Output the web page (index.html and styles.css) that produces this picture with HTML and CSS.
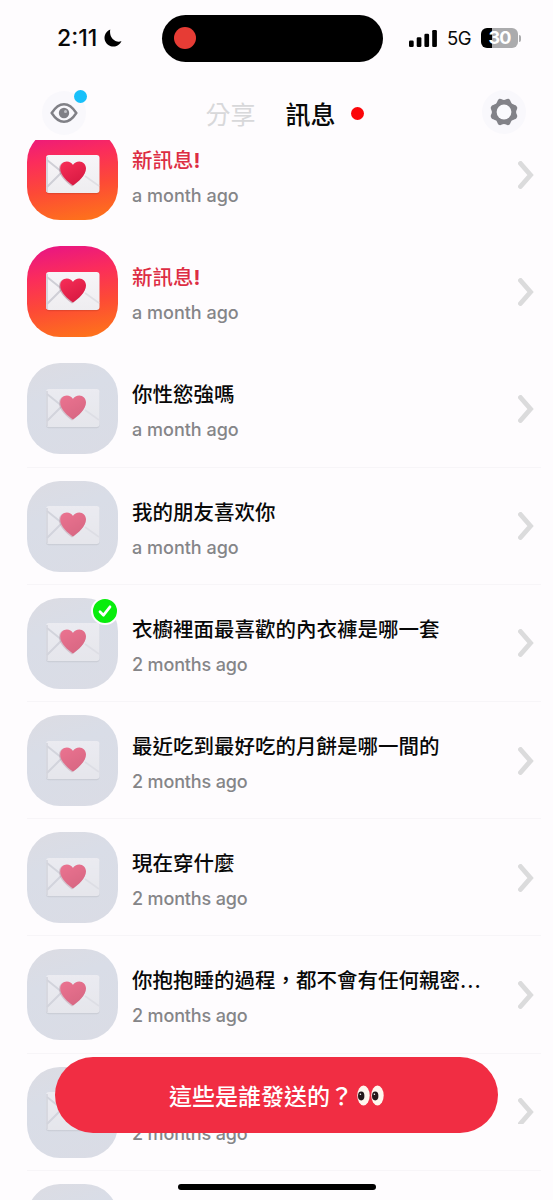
FILE: index.html
```
<!DOCTYPE html>
<html lang="zh-Hant">
<head>
<meta charset="utf-8">
<title>訊息</title>
<link rel="stylesheet" href="styles.css">
</head>
<body>
<svg class="defs" width="0" height="0" aria-hidden="true">
  <defs>
    <linearGradient id="paper" x1="0" y1="0" x2="0" y2="1"><stop offset="0" stop-color="#f7f5f8"/><stop offset="1" stop-color="#eeedf0"/></linearGradient>
    <linearGradient id="heart" x1="0" y1="0" x2="0.6" y2="1"><stop offset="0" stop-color="#f82e58"/><stop offset="1" stop-color="#d81a42"/></linearGradient>
    <symbol id="letter" viewBox="0 0 60 44">
      <rect x="3" y="3.200" width="53.500" height="38" rx="3" fill="#000" opacity=".1"/>
      <rect x="3" y="2" width="53.500" height="38" rx="3" fill="url(#paper)"/>
      <path d="M4 7 19 19 4 34" fill="none" stroke="#cfcfd6" stroke-width="2"/>
      <path d="M56 33 42 23" fill="none" stroke="#e0dfe4" stroke-width="1.600"/>
      <path d="M4 4v35" stroke="#d0d0d7" stroke-width="1.600"/>
      <path d="M29 33.500C24 29.800 16 23.300 16 16.100C16 11.800 19 9.100 22.700 9.100C25.500 9.100 27.800 10.500 29.200 12.500C30.700 10.500 32.800 9.100 35.700 9.100C39.500 9.100 42.300 11.800 42.300 15.900C42.300 23 34 29.800 29 33.500Z" fill="#8d4058" opacity=".35"/>
      <path d="M30 32.500C25 29 17.200 22.500 17.200 15.500C17.200 11.400 20.200 8.500 23.800 8.500C26.500 8.500 28.700 9.800 30 12C31.400 9.800 33.700 8.500 36.300 8.500C40 8.500 43 11.400 43 15.500C43 22.500 35 29 30 32.500Z" fill="url(#heart)"/>
    </symbol>
    <symbol id="chevron" viewBox="0 0 16 28"><path d="M2.500 2.500 12.500 14 2.500 25.500" fill="none" stroke="#dbdbdc" stroke-width="4.900" stroke-linecap="round" stroke-linejoin="miter"/></symbol>
  </defs>
</svg>

<header class="status">
  <div class="clock"><span class="time">2:11</span><svg class="moon" viewBox="0 0 18 18"><path d="M6.300.500A8.800 8.800 0 1 0 17.500 12C12 14.600 4.500 8.800 6.300.500Z"/></svg></div>
  <div class="island"><span class="recording"></span></div>
  <div class="signals">
    <svg class="bars" viewBox="0 0 28 17"><rect y="10.500" width="4.700" height="6.500" rx="1.300"/><rect x="7.700" y="7.300" width="4.700" height="9.700" rx="1.300"/><rect x="15.400" y="3.700" width="4.700" height="13.300" rx="1.300"/><rect x="23.200" width="4.700" height="17" rx="1.300"/></svg>
    <span class="network">5G</span>
    <div class="battery">30</div><span class="battery-tip"></span>
  </div>
</header>

<nav class="nav">
  <div class="round eye"><svg viewBox="0 0 28 22"><path d="M1.700 11C5.500 5 9.500 2.200 14 2.200S22.500 5 26.300 11C22.500 17 18.500 19.800 14 19.800S5.500 17 1.700 11Z" fill="none" stroke="#808086" stroke-width="2.400"/><circle cx="14" cy="11" r="5.200" fill="#808086"/><circle cx="15.500" cy="9.600" r="1.500" fill="#c2c2c7"/></svg><span class="blue-dot"></span></div>
  <div class="tabs"><span class="tab">分享</span><span class="tab active">訊息</span><span class="red-dot"></span></div>
  <div class="round gear"><svg viewBox="0 0 28 28"><path d="M14 1.900C16 1.900 17 .3 18.900 .9C20.600 1.600 20.400 3.800 21.800 5.400C23.600 6.800 26.400 6.600 27.100 9.100C27.700 11 26.100 12 26.100 14S27.700 17 27.100 18.900C26.400 21.400 23.600 21.200 21.800 22.600C20.400 24.200 20.600 26.400 18.900 27.100C17 27.700 16 26.100 14 26.100S11 27.700 9.100 27.100C7.400 26.400 7.600 24.200 6.200 22.600C4.400 21.200 1.600 21.400 .9 18.900C.3 17 1.900 16 1.900 14S.3 11 .9 9.100C1.600 6.600 4.400 6.800 6.200 5.400C7.600 3.800 7.400 1.600 9.100 .9C11 .3 12 1.900 14 1.900Z" fill="#828288"/><circle cx="14" cy="14" r="7.400" fill="#fafafd"/></svg></div>
</nav>

<main class="list">
  <article class="row unread"><div class="avatar"><svg><use href="#letter"/></svg></div><div class="text"><h2>新訊息<b>!</b></h2><p class="m">a month ago</p></div><svg class="go"><use href="#chevron"/></svg></article>
  <article class="row unread"><div class="avatar"><svg><use href="#letter"/></svg></div><div class="text"><h2>新訊息<b>!</b></h2><p class="m">a month ago</p></div><svg class="go"><use href="#chevron"/></svg></article>
  <article class="row"><div class="avatar"><svg><use href="#letter"/></svg></div><div class="text"><h2>你性慾強嗎</h2><p class="m">a month ago</p></div><svg class="go"><use href="#chevron"/></svg></article>
  <article class="row"><div class="avatar"><svg><use href="#letter"/></svg></div><div class="text"><h2>我的朋友喜欢你</h2><p class="m">a month ago</p></div><svg class="go"><use href="#chevron"/></svg></article>
  <article class="row"><div class="avatar"><svg><use href="#letter"/></svg><span class="check"><svg viewBox="0 0 24 24"><path d="m7 12.800 3.500 3.400 6.500-8.400" fill="none" stroke="#fff" stroke-width="2.700" stroke-linecap="round" stroke-linejoin="round"/></svg></span></div><div class="text"><h2>衣櫥裡面最喜歡的內衣褲是哪一套</h2><p>2 months ago</p></div><svg class="go"><use href="#chevron"/></svg></article>
  <article class="row"><div class="avatar"><svg><use href="#letter"/></svg></div><div class="text"><h2>最近吃到最好吃的月餅是哪一間的</h2><p>2 months ago</p></div><svg class="go"><use href="#chevron"/></svg></article>
  <article class="row"><div class="avatar"><svg><use href="#letter"/></svg></div><div class="text"><h2>現在穿什麼</h2><p>2 months ago</p></div><svg class="go"><use href="#chevron"/></svg></article>
  <article class="row"><div class="avatar"><svg><use href="#letter"/></svg></div><div class="text"><h2>你抱抱睡的過程，都不會有任何親密<span class="dots">...</span></h2><p>2 months ago</p></div><svg class="go"><use href="#chevron"/></svg></article>
  <article class="row"><div class="avatar"><svg><use href="#letter"/></svg></div><div class="text"><h2></h2><p>2 months ago</p></div><svg class="go cut"><use href="#chevron"/></svg></article>
  <article class="row"><div class="avatar"></div></article>
</main>

<button class="reveal"><span>這些是誰發送的？</span><svg class="eyes" viewBox="0 0 27 21"><g fill="#fff7ee"><ellipse cx="6.500" cy="10.500" rx="6.200" ry="10"/><ellipse cx="20.500" cy="10.500" rx="6.200" ry="10"/></g><g fill="#25191a"><ellipse cx="4.200" cy="11" rx="3.200" ry="4.400"/><ellipse cx="18.200" cy="11" rx="3.200" ry="4.400"/></g><g fill="#fff"><circle cx="3.400" cy="9.200" r=".8"/><circle cx="17.400" cy="9.200" r=".8"/></g></svg></button>
<div class="home"></div>
</body>
</html>
```
FILE: styles.css
```
* { box-sizing: border-box; }
body {
  position: relative;
  display: flex;
  flex-direction: column;
  width: 553px;
  height: 1200px;
  margin: 0;
  overflow: hidden;
  background: #fefcfe;
  color: #080808;
  font-family: Inter, "Noto Sans CJK TC", sans-serif;
}
.defs { position: absolute; }

.status { display: flex; align-items: center; height: 76px; flex: none; }
.clock { display: flex; align-items: center; width: 162px; padding-left: 57px; gap: 5px; }
.time { width: 42px; font-size: 23px; font-weight: 500; letter-spacing: 0; white-space: nowrap; }
.moon { width: 18px; height: 18px; }
.island { display: flex; align-items: center; width: 221px; height: 47px; padding-left: 12px; border-radius: 24px; background: #000; }
.recording { width: 22px; height: 22px; border-radius: 50%; background: #e63c35; }
.signals { display: flex; align-items: center; padding-left: 26px; }
.bars { width: 28px; height: 17px; }
.network { width: 25px; margin-left: 10px; font-size: 18.500px; letter-spacing: -.4px; }
.battery {
  width: 37px; height: 20px; margin-left: 9px;
  border-radius: 6px;
  background: linear-gradient(90deg, #000 11px, #ababad 11px);
  color: #fff;
  font-size: 18px; font-weight: 700; line-height: 20px; letter-spacing: -.8px; text-align: center;
}
.battery-tip { width: 2px; height: 7px; margin-left: 1px; border-radius: 0 2px 2px 0; background: #ababad; }

.nav { display: flex; align-items: center; justify-content: space-between; height: 64px; flex: none; padding: 9px 27px 0 42px; }
.round { position: relative; display: flex; align-items: center; justify-content: center; width: 44px; height: 44px; border-radius: 50%; background: #f9f8fc; }
.round svg { width: 28px; }
.blue-dot { position: absolute; top: -1px; right: -1px; width: 13px; height: 13px; border-radius: 50%; background: #18c0fa; }
.tabs { display: flex; align-items: center; width: 160px; margin-left: 3px; padding-top: 4px; font-size: 25px; line-height: 36px; }
.tab { width: 50px; color: #d8d8da; font-weight: 400; }
.tab.active { margin-left: 30px; color: #080808; font-weight: 500; }
.red-dot { width: 13px; height: 13px; flex: none; margin: -2px 0 0 15px; border-radius: 50%; background: #fb0509; }
.gear { margin-bottom: 1px; }

.list { height: 1060px; overflow: hidden; padding-left: 27px; }
.row { display: flex; align-items: center; width: 514px; height: 117.200px; padding-top: 1px; border-bottom: 1px solid #f7f5f8; }
.row:first-child { margin-top: -24px; }
.unread { border-color: transparent; }
.avatar {
  position: relative;
  display: flex; align-items: center; justify-content: center;
  width: 91px; height: 91px; flex: none;
  border-radius: 33px;
  background: linear-gradient(160deg, #dcdce3, #d9dde7 35%, #dadce5);
}
.avatar > svg { width: 60px; height: 44px; opacity: .6; }
.unread .avatar { background: linear-gradient(170deg, #e91682 4%, #fb2c5c 32%, #fd4a36 62%, #fe7817); }
.unread .avatar > svg { opacity: 1; }
.check { position: absolute; top: -1px; right: -1px; display: flex; width: 28px; height: 28px; border: 2px solid #fefcfe; border-radius: 50%; background: #08ed0d; }
.check svg { width: 24px; height: 24px; }
.text { flex: 1; padding: 6px 0 0 14px; }
.text h2 { height: 30px; margin: 0 0 7px; font-size: 20.500px; line-height: 30px; font-weight: 500; white-space: nowrap; }
.text p { margin: 0; color: #858588; font-size: 18px; line-height: 26px; font-weight: 500; letter-spacing: -.15px; }
.text p.m { letter-spacing: 0; }
.unread h2 { color: #dd2d43; }
.dots { letter-spacing: 1px; }
.go { width: 16px; height: 28px; margin-right: 7px; }
.cut { clip-path: inset(0 0 2px 0); }

.reveal {
  position: absolute; left: 55px; top: 1057px;
  display: flex; align-items: center; justify-content: center; gap: 4px;
  width: 443px; height: 76px; padding: 0;
  border: 0; border-radius: 38px;
  background: #f12d43; color: #fff;
  font: 500 23px Inter, "Noto Sans CJK TC", sans-serif;
}
.eyes { width: 27px; height: 21px; }
.home { position: absolute; left: 178px; top: 1184px; width: 198px; height: 6px; border-radius: 3px; background: #000; }
```
